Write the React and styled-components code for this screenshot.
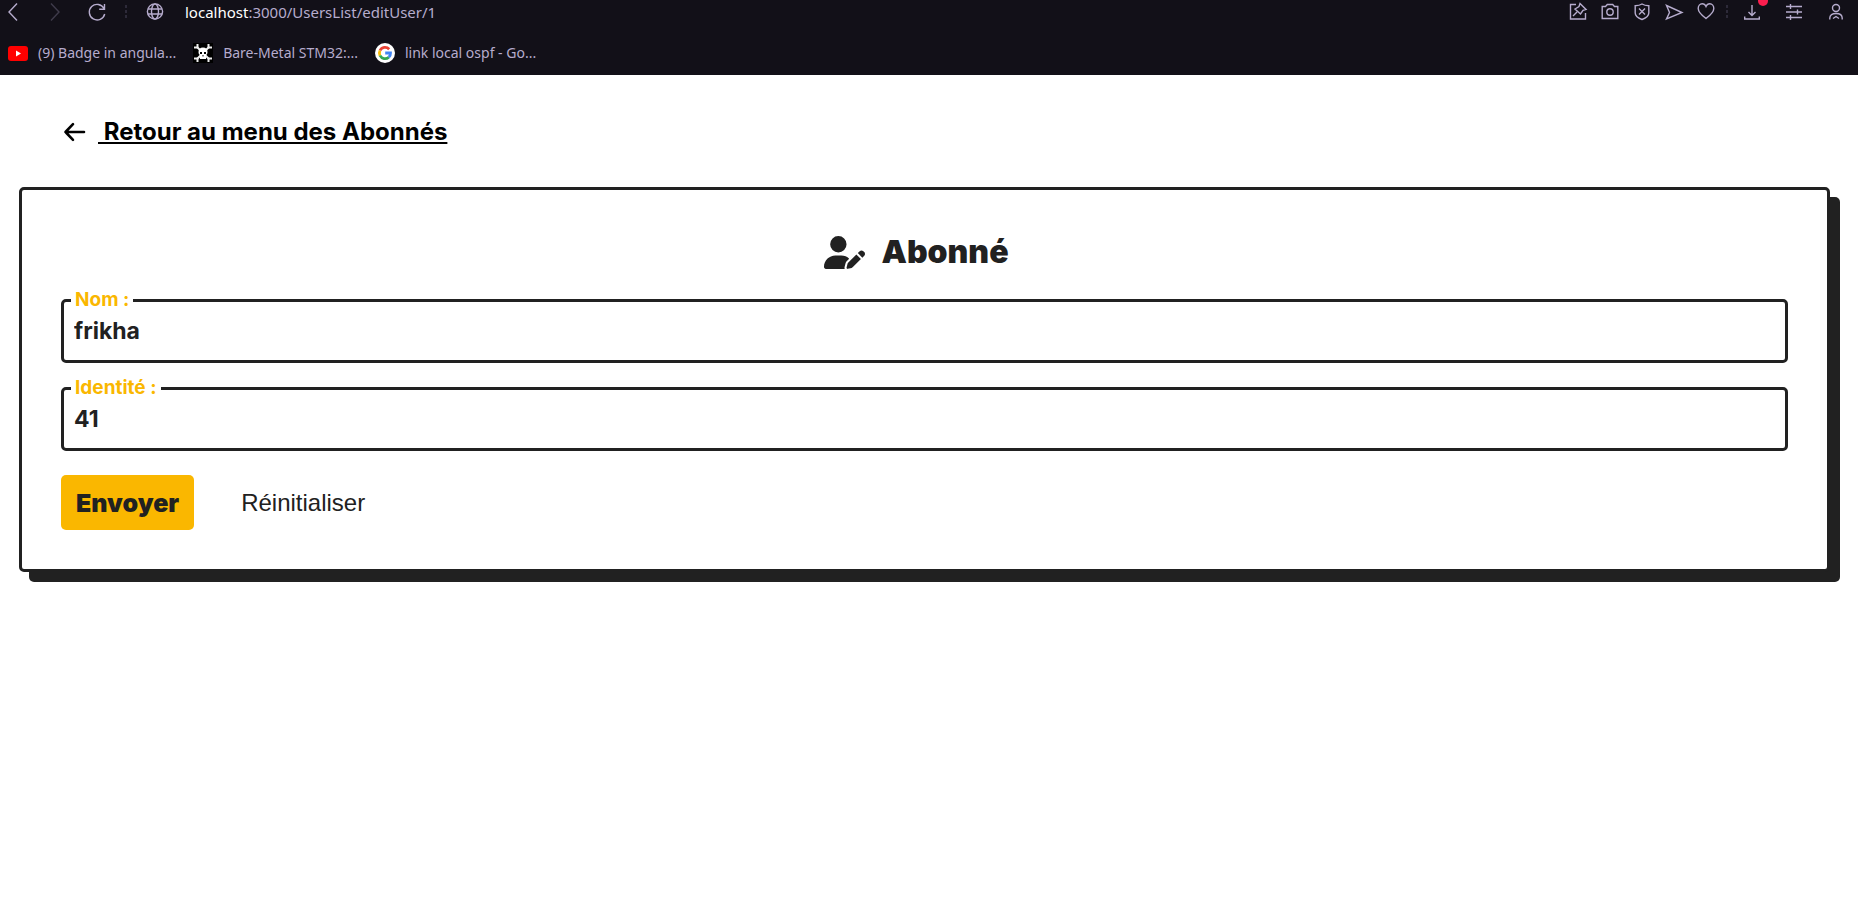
import React, { useState } from "react";
import styled, { createGlobalStyle } from "styled-components";
import { FaUserPen } from "react-icons/fa6";

const ink = "#212121";
const amber = "#fab700";

const GlobalStyle = createGlobalStyle`
  *, *::before, *::after { box-sizing: border-box; }
  body { margin: 0; background: #fff; color: ${ink}; font-family: Inter, "Liberation Sans", sans-serif; }
`;

const Chrome = styled.header`
  background: #121018;
  color: #b6accd;
  font-family: "Noto Sans", "Open Sans", sans-serif;
  padding-bottom: 10px;
`;

const Toolbar = styled.div`
  display: flex;
  justify-content: space-between;
  height: 23px;
  padding: 0 10px 0 1px;
`;

const ToolGroup = styled.div`
  display: flex;
  align-items: center;
  gap: ${(p) => p.$gap}px;
`;

const ToolButton = styled.button`
  display: flex;
  position: relative;
  align-items: center;
  justify-content: center;
  width: 24px;
  height: 24px;
  padding: 0;
  border: 0;
  background: none;
  color: ${(p) => (p.disabled ? "#3f3b4b" : "#b6accd")};
`;

const AlertDot = styled.span`
  position: absolute;
  top: -4px;
  right: -4px;
  width: 10px;
  height: 10px;
  border-radius: 50%;
  background: #fa1e4e;
`;

const Address = styled.div`
  padding-left: 2px;
  font-size: 15px;
  line-height: 24px;
  white-space: nowrap;

  strong { color: #fff; font-weight: 400; }
`;

const Bookmarks = styled.nav`
  display: flex;
  gap: 17px;
  padding: 18px 8px 0;
`;

const Bookmark = styled.a`
  display: flex;
  align-items: center;
  gap: 10px;
  color: #b6accd;
  font-size: 14px;
  line-height: 24px;
  text-decoration: none;
  white-space: nowrap;
`;

const Main = styled.main`
  padding: 41px 28px 40px 19px;
`;

const BackLink = styled.a`
  display: inline-flex;
  align-items: center;
  gap: 12px;
  margin: 0 44px 39px;
  color: #000;
  font-size: 24px;
  font-weight: 700;
  line-height: 32px;
  text-decoration: none;

  span { white-space: pre; text-decoration: underline; }
`;

const Card = styled.form`
  display: flex;
  flex-direction: column;
  gap: 24px;
  padding: 39px;
  border: 3px solid ${ink};
  border-radius: 5px;
  background: #fff;
  box-shadow: 10px 10px 0 ${ink};
`;

const Title = styled.h1`
  display: flex;
  align-items: center;
  justify-content: center;
  gap: 16px;
  margin: 0;
  padding-right: 16px;
  font-size: 32px;
  font-weight: 900;
  line-height: 46px;
`;

const Field = styled.div`
  position: relative;
`;

const FieldLabel = styled.label`
  position: absolute;
  top: -11px;
  left: 10px;
  padding: 0 4px;
  background: #fff;
  color: ${amber};
  font-size: 19px;
  font-weight: 700;
  line-height: 24px;
`;

const TextInput = styled.input`
  display: block;
  width: 100%;
  height: 64px;
  padding: 0 10px;
  border: 3px solid ${ink};
  border-radius: 5px;
  outline: 0;
  background: #fff;
  color: ${ink};
  font-family: inherit;
  font-size: 23px;
  font-weight: 700;
`;

const Actions = styled.div`
  display: flex;
  gap: 32px;
`;

const ActionButton = styled.button`
  height: 55px;
  padding: 1px 15px 0;
  border: 0;
  border-radius: 5px;
  background: ${(p) => (p.$primary ? amber : "transparent")};
  color: ${ink};
  font-family: ${(p) => (p.$primary ? "inherit" : '"Liberation Sans", Arial, sans-serif')};
  font-size: ${(p) => (p.$primary ? 25 : 24)}px;
  font-weight: ${(p) => (p.$primary ? 900 : 400)};
`;

const Glyph = ({ children }) => (
  <svg width="24" height="24" viewBox="0 0 24 24" fill="none" stroke="currentColor" strokeWidth="1.4" aria-hidden="true">
    {children}
  </svg>
);

const Dots = () => (
  <svg width="2" height="24" viewBox="0 0 2 24" fill="#2d2a39" aria-hidden="true">
    <path d="M0 5h2v3H0zM0 10h2v3H0zM0 15h2v3H0z" />
  </svg>
);

const BackArrow = () => (
  <svg width="23" height="20" viewBox="0 0 23 20" fill="none" stroke="currentColor" strokeWidth="2.600" strokeLinecap="round" strokeLinejoin="round" aria-hidden="true">
    <path d="M21 10H2.500M10 2.200 2.500 10l7.500 7.800" />
  </svg>
);

const pageTools = [
  ["Épingler", <><path d="M10 4.500H4.500v14.500H19.500V13" /><path d="m14 3.500 6 6-3 .8-2.500 3.700-5.500-5L13 6.500zM11 12 7 16" /></>],
  ["Capture", <><path d="M4.200 6.500h3.300L9.300 4.500h5.400l1.800 2h3.300v12H4.200z" /><circle cx="12" cy="12" r="3.200" /></>],
  ["Protection", <><path d="M12 4c2 1.300 4.500 1.700 6.800 1.700V13c0 3-3 5-6.800 6.500C8.200 18 5.200 16 5.200 13V5.700C7.500 5.700 10 5.300 12 4z" /><path d="m9 8.500 6 6m0-6-6 6" /></>],
  ["Envoyer la page", <path d="M4.500 5.500 20 12.500 4.500 19l3-6.500z" />],
  ["Favori", <path d="M12 18.500C8 15.500 4.200 12.500 4.200 8.500c0-2.500 1.700-4.800 4-4.800 1.700 0 3.100 1.200 3.800 2.800.7-1.600 2.100-2.800 3.800-2.800 2.300 0 4 2.300 4 4.800 0 4-3.800 7-7.800 10z" />],
];

const YouTubeIcon = () => (
  <svg width="20" height="20" viewBox="0 0 20 20" aria-hidden="true">
    <rect y="3" width="20" height="15" rx="3" fill="#f00" />
    <path d="m8 7.500 5 3-5 3z" fill="#fff" />
  </svg>
);

const SkullIcon = () => (
  <svg width="20" height="20" viewBox="0 0 20 20" aria-hidden="true">
    <path d="M0 0h20v20H0z" fill="#000" />
    <g fill="none" stroke="#eee" strokeWidth="2">
      <path d="M4 4 16 16M16 4 4 16" />
      <path d="M1 4.500h3.500V1M15.500 1v3.500H19M1 15.500h3.500V19M15.500 19v-3.500H19" />
    </g>
    <path d="M10 4.500c3 0 4.500 2 4.500 4.500 0 1.500-.5 2.500-1.500 3.200V16H7v-3.800C6 11.500 5.500 10.500 5.500 9 5.500 6.500 7 4.500 10 4.500z" fill="#fff" />
    <path d="M7 9h2v2H7zM11 9h2v2h-2zM9.500 12h1v1.500h-1z" fill="#000" />
  </svg>
);

const GoogleIcon = () => (
  <svg width="20" height="20" viewBox="0 0 20 20" aria-hidden="true">
    <circle cx="10" cy="10" r="10" fill="#fff" />
    <g fill="none" strokeWidth="2.800">
      <path d="M14.200 6.200A5.600 5.600 0 0 0 5 7.500" stroke="#ea4335" />
      <path d="M5 7.500a5.600 5.600 0 0 0 0 5" stroke="#fbbc05" />
      <path d="M5 12.500a5.600 5.600 0 0 0 8.800 1.700" stroke="#34a853" />
      <path d="M13.800 14.200A5.600 5.600 0 0 0 15.500 10H10.200" stroke="#4285f4" />
    </g>
  </svg>
);

const bookmarks = [
  ["(9) Badge in angula...", YouTubeIcon],
  ["Bare-Metal STM32:...", SkullIcon],
  ["link local ospf - Go...", GoogleIcon],
];

function BrowserBar() {
  return (
    <Chrome>
      <Toolbar>
        <ToolGroup $gap={16}>
          <ToolGroup $gap={18}>
            <ToolButton type="button" aria-label="Précédent"><Glyph><path d="m16 3.500-8 8.500 8 8.500" /></Glyph></ToolButton>
            <ToolButton type="button" aria-label="Suivant" disabled><Glyph><path d="m8 3.500 8 8.500-8 8.500" /></Glyph></ToolButton>
            <ToolButton type="button" aria-label="Actualiser">
              <Glyph><path d="M19 8.500A7.800 7.800 0 1 0 19.700 14M19.500 4v5.300h-5.300" /></Glyph>
            </ToolButton>
          </ToolGroup>
          <Dots />
          <ToolButton type="button" aria-label="Informations du site">
            <Glyph>
              <circle cx="12" cy="11.500" r="7.600" />
              <ellipse cx="12" cy="11.500" rx="3.500" ry="7.600" />
              <path d="M5 9h14M5 14h14" />
            </Glyph>
          </ToolButton>
          <Address><strong>localhost</strong>:3000/UsersList/editUser/1</Address>
        </ToolGroup>
        <ToolGroup $gap={18}>
          <ToolGroup $gap={12}>
            <ToolGroup $gap={8}>
              {pageTools.map(([name, drawing]) => (
                <ToolButton key={name} type="button" aria-label={name}><Glyph>{drawing}</Glyph></ToolButton>
              ))}
              <Dots />
            </ToolGroup>
            <ToolButton type="button" aria-label="Téléchargements">
              <Glyph><path d="M12 5v10.500m-3.500-3.500L12 15.500l3.500-3.500M4.700 16.500V19h14.600v-2.500" /></Glyph>
              <AlertDot />
            </ToolButton>
          </ToolGroup>
          <ToolButton type="button" aria-label="Réglages">
            <Glyph><path d="M4 6.500h16M4 12h16M4 17.500h16M8.500 4v5M15.500 9.500v5M8.500 15v5" /></Glyph>
          </ToolButton>
          <ToolButton type="button" aria-label="Profil">
            <Glyph><circle cx="12" cy="8" r="3.500" /><path d="M5.800 19.500V18c0-3 2.500-4.500 6.200-4.500s6.200 1.500 6.200 4.500v1.500M9 18.500l3-2 3 2" /></Glyph>
          </ToolButton>
        </ToolGroup>
      </Toolbar>
      <Bookmarks>
        {bookmarks.map(([text, Icon]) => (
          <Bookmark key={text} href="#"><Icon />{text}</Bookmark>
        ))}
      </Bookmarks>
    </Chrome>
  );
}

function FormField({ id, label, initial }) {
  const [value, setValue] = useState(initial);
  return (
    <Field>
      <TextInput id={id} value={value} onChange={(e) => setValue(e.target.value)} />
      <FieldLabel htmlFor={id}>{label}</FieldLabel>
    </Field>
  );
}

export default function App() {
  return (
    <>
      <GlobalStyle />
      <BrowserBar />
      <Main>
        <BackLink href="#">
          <BackArrow />
          <span>{" Retour au menu des Abonnés"}</span>
        </BackLink>
        <Card onSubmit={(e) => e.preventDefault()}>
          <Title><FaUserPen aria-hidden="true" size={41} />Abonné</Title>
          <FormField id="nom" label="Nom :" initial="frikha" />
          <FormField id="identite" label="Identité :" initial="41" />
          <Actions>
            <ActionButton type="submit" $primary>Envoyer</ActionButton>
            <ActionButton type="reset">Réinitialiser</ActionButton>
          </Actions>
        </Card>
      </Main>
    </>
  );
}
